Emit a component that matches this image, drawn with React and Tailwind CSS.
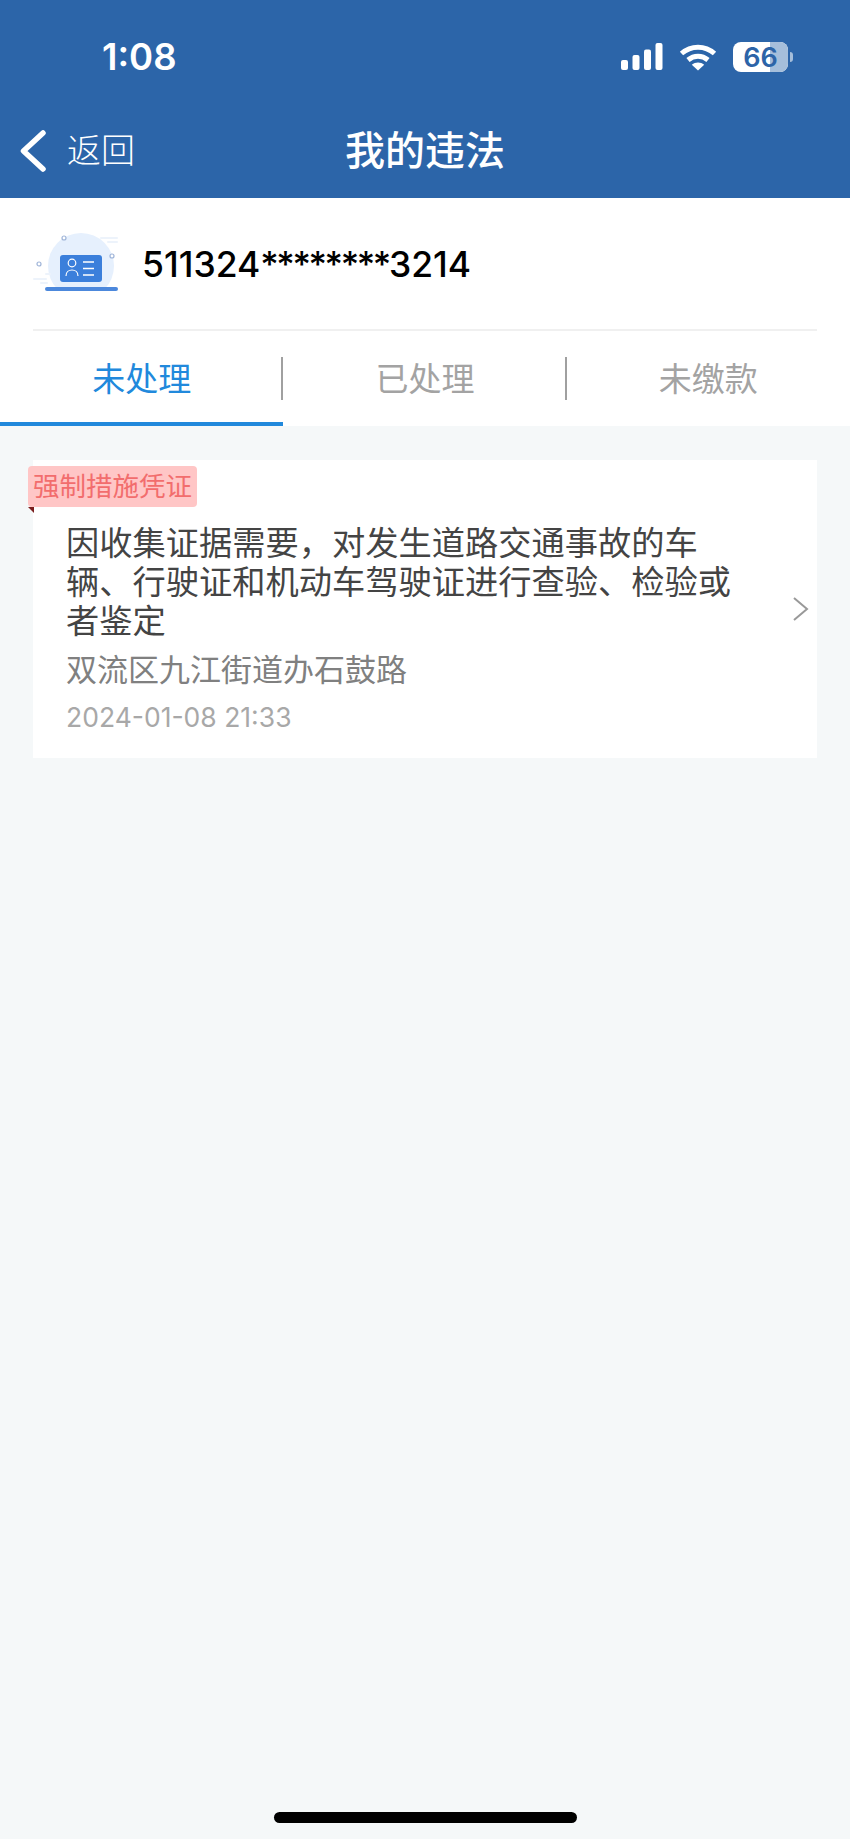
import React from 'react';

const cjk = 'font-["Inter","Noto_Sans_CJK_SC",sans-serif]';

function StatusIcons() {
  return (
    <div className="flex items-center">
      <svg width="42" height="28" viewBox="0 0 42 28" className="mr-[16px]" fill="#fff">
        <rect x="0" y="17" width="7" height="10" rx="2" />
        <rect x="11.5" y="12" width="7" height="15" rx="2" />
        <rect x="23" y="6.500" width="7" height="20.500" rx="2" />
        <rect x="34.500" y="0" width="7" height="27" rx="2" />
      </svg>
      <svg width="38" height="28" viewBox="0 0 38 28" className="mr-[16px]" fill="none" stroke="#fff" strokeWidth="5">
        <path d="M2.500 10.500C12 2 26 2 35.500 10.500" />
        <path d="M9 17C15 12 23 12 29 17" />
        <path d="M19 27.500L12.800 21.800C16.500 18.800 21.500 18.800 25.200 21.800Z" fill="#fff" stroke="none" />
      </svg>
      <div className="relative flex h-[30px] w-[55px] items-center justify-center overflow-hidden rounded-[8px] bg-white">
        <div className="absolute inset-y-0 right-0 w-[18px] bg-[#a5bedb]" />
        <span className="relative text-[27px] leading-none font-semibold text-[#2c64a8]">66</span>
      </div>
      <div className="ml-[2px] h-[10px] w-[3px] rounded-r-full bg-[#a5bedb]" />
    </div>
  );
}

function IdBadge() {
  return (
    <svg width="90" height="70" viewBox="0 0 90 70" className="shrink-0">
      <clipPath id="badgeClip">
        <rect x="0" y="0" width="90" height="60" />
      </clipPath>
      <circle cx="48" cy="37" r="33" fill="#e6f0fd" clipPath="url(#badgeClip)" />
      <g fill="#edf3fb">
        <rect x="67" y="8" width="18" height="2" rx="1" />
        <rect x="74" y="12" width="11" height="2" rx="1" />
        <rect x="0" y="49" width="14" height="2" rx="1" />
        <rect x="12" y="44" width="6" height="2" rx="1" />
        <rect x="7" y="53" width="8" height="2" rx="1" />
      </g>
      <circle cx="31" cy="9" r="2" fill="#fff" stroke="#9fb4d8" strokeWidth="1.200" />
      <circle cx="79" cy="27" r="2" fill="#fff" stroke="#9fb4d8" strokeWidth="1.200" />
      <circle cx="6" cy="35" r="2" fill="#fff" stroke="#9fb4d8" strokeWidth="1.200" />
      <rect x="27" y="26" width="42" height="27" rx="3" fill="#3b7fdb" />
      <circle cx="39" cy="34" r="3.800" fill="none" stroke="#fff" strokeWidth="1.200" />
      <path d="M33 47c0-8 12-8 12 0" fill="none" stroke="#fff" strokeWidth="1.200" />
      <g stroke="#fff" strokeWidth="1.400">
        <path d="M50 33h11M50 39.500h11M50 46h11" />
      </g>
      <rect x="12" y="58" width="73" height="4" rx="2" fill="#4c88dc" />
    </svg>
  );
}

export default function App() {
  const tabs = ['未处理', '已处理', '未缴款'];

  return (
    <div className={`flex min-h-[1839px] w-[850px] flex-col bg-[#f5f8f9] ${cjk}`}>
      {/* Header */}
      <header className="h-[198px] bg-[#2c65a9] text-white">
        <div className="flex items-center justify-between pt-[38px] pr-[57px] pl-[102px]">
          <span className="text-[36.500px] leading-[38px] font-semibold">1:08</span>
          <StatusIcons />
        </div>
        <div className="relative mt-[45px] flex h-[60px] items-center justify-center">
          <div className="absolute top-[9px] left-[20px] flex items-center">
            <svg width="26" height="42" viewBox="0 0 26 42" fill="none" stroke="#fff" strokeWidth="5.500" strokeLinecap="round" strokeLinejoin="round">
              <path d="M23 3L3.500 21 23 39" />
            </svg>
            <span className="ml-[21px] text-[34px] leading-[42px] font-light">返回</span>
          </div>
          <h1 className="text-[40px] leading-[60px] font-medium">我的违法</h1>
        </div>
      </header>

      {/* ID + tabs */}
      <section className="bg-white">
        <div className="mx-[33px] flex h-[133px] items-center border-b-2 border-[#f0f0f0]">
          <IdBadge />
          <span className="mt-[2px] ml-[19px] text-[35.500px] font-medium text-black">
            511324<span className="tracking-[-2.400px]">********</span>3214
          </span>
        </div>
        <div className="flex h-[95px]">
          {tabs.map((tab, i) => (
            <div
              key={tab}
              className={`relative flex flex-1 items-center justify-center pt-[2px] text-[33px] ${i === 0 ? 'text-[#2189dc]' : 'text-[#a3a3a3]'}`}
            >
              {tab}
              {i < 2 && <div className="absolute top-[26px] right-0 h-[43px] w-[2px] bg-[#a0a0a0]" />}
              {i === 0 && <div className="absolute right-0 bottom-0 left-0 h-[4px] bg-[#2189dc]" />}
            </div>
          ))}
        </div>
      </section>

      {/* List */}
      <main className="flex-1 px-[33px] pt-[34px]">
        <div className="relative flex items-center bg-white pr-[7px] pl-[33px]">
          <div className="absolute top-[6px] -left-[5px] h-[41px] rounded-[4px] bg-[#ffc6c6] px-[5px] text-[26.500px] leading-[41px] text-[#f26d6d]">
            强制措施凭证
          </div>
          <div className="absolute top-[47px] -left-[5px] h-0 w-0 border-t-[6px] border-l-[6px] border-t-[#7a1f1f] border-l-transparent" />
          <div className="flex-1 pt-[64px] pb-[25px]">
            <p className="w-[680px] text-[33.250px] leading-[39px] text-[#444]">
              因收集证据需要，对发生道路交通事故的车辆、行驶证和机动车驾驶证进行查验、检验或者鉴定
            </p>
            <p className="mt-[9px] text-[31px] leading-[40px] text-[#808080]">双流区九江街道办石鼓路</p>
            <p className="mt-[11px] text-[26.500px] leading-[32px] text-[#a8a8a8]">2024-01-08 21:33</p>
          </div>
          <svg width="18" height="26" viewBox="0 0 18 26" fill="none" stroke="#999" strokeWidth="2" className="shrink-0">
            <path d="M2 2l13 11L2 24" />
          </svg>
        </div>
      </main>

      {/* Home indicator */}
      <div className="flex justify-center pb-[16px]">
        <div className="h-[11px] w-[303px] rounded-full bg-black" />
      </div>
    </div>
  );
}
